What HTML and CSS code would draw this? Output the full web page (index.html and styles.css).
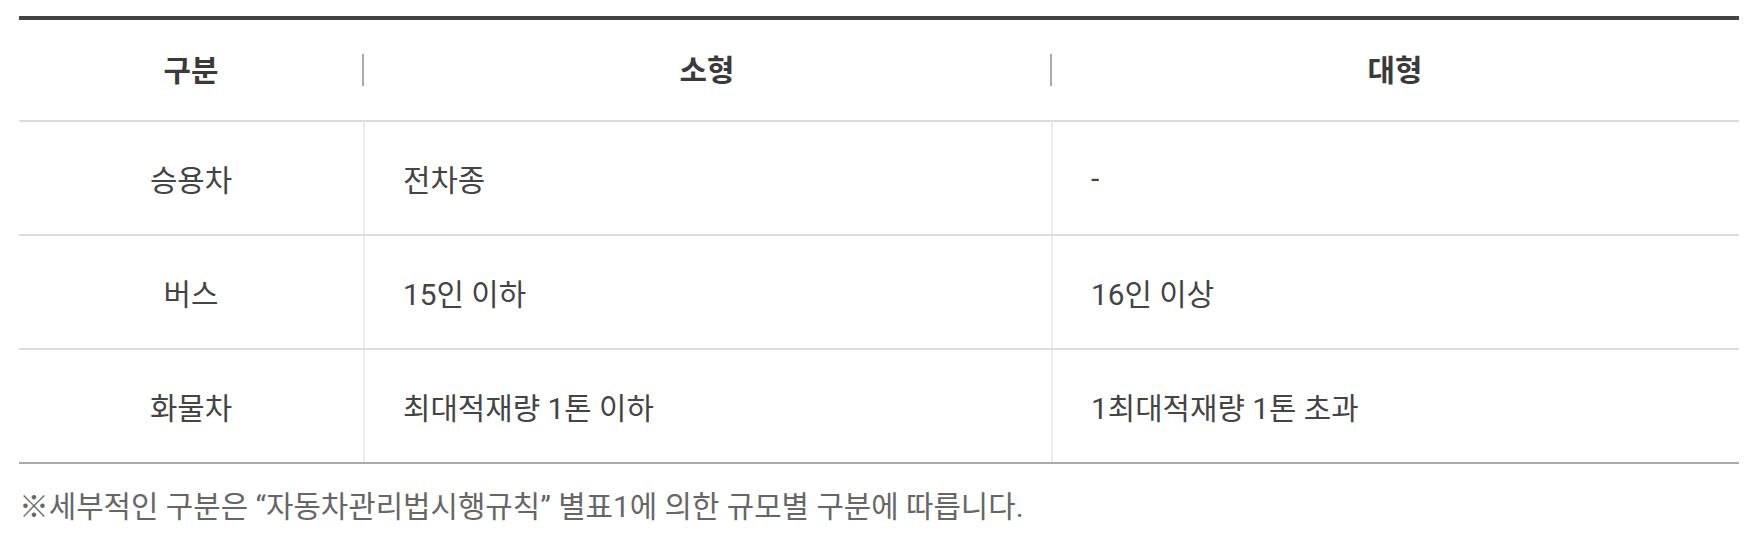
FILE: index.html
```html
<!DOCTYPE html>
<html lang="ko">
<head>
<meta charset="utf-8">
<title>자동차 규모별 구분</title>
<link rel="stylesheet" href="styles.css">
</head>
<body>
<div class="wrap">
  <div class="tbl">
    <div class="row head">
      <div class="th">구분</div>
      <div class="th div">소형</div>
      <div class="th div">대형</div>
    </div>
    <div class="row">
      <div class="td center">승용차</div>
      <div class="td">전차종</div>
      <div class="td">-</div>
    </div>
    <div class="row">
      <div class="td center">버스</div>
      <div class="td">15인 이하</div>
      <div class="td">16인 이상</div>
    </div>
    <div class="row last">
      <div class="td center">화물차</div>
      <div class="td">최대적재량 1톤 이하</div>
      <div class="td">1최대적재량 1톤 초과</div>
    </div>
  </div>
  <p class="note">※세부적인 구분은 “자동차관리법시행규칙” 별표1에 의한 규모별 구분에 따릅니다.</p>
</div>
</body>
</html>
```
FILE: styles.css
```css
html, body {
  margin: 0;
  padding: 0;
  background: #fff;
}
body {
  font-family: Roboto, "Noto Sans CJK KR", "Noto Sans", sans-serif;
  color: #444;
  font-size: 29.8px;
}
.wrap {
  padding: 16px 19px 0 19px;
}
.tbl {
  border-top: 4px solid #444;
}
.row {
  display: grid;
  grid-template-columns: 1fr 2fr 2fr;
  height: 112px;
  border-bottom: 2px solid #dcdcdc;
}
.row.head {
  height: 100px;
}
.row.last {
  border-bottom-color: #aaaaaa;
}
.th {
  position: relative;
  display: flex;
  align-items: center;
  justify-content: center;
  padding-bottom: 4px;
  font-weight: 700;
  color: #3a3a3a;
}
.th.div::before {
  content: "";
  position: absolute;
  left: -1px;
  top: 34px;
  width: 2px;
  height: 32px;
  background: #aaaaaa;
}
.td {
  display: flex;
  align-items: center;
  padding-left: 38px;
  border-left: 2px solid #ececf0;
}
.td.center {
  justify-content: center;
  padding-left: 0;
  border-left: none;
}
.note {
  margin: 23px 0 0 0;
  line-height: 40px;
  color: #666;
}
```
